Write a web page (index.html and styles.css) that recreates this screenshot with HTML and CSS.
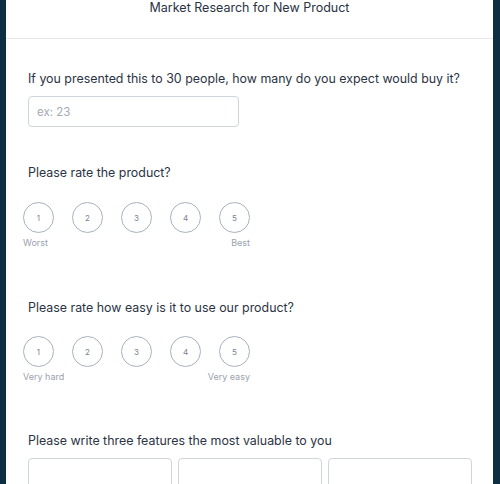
FILE: index.html
```html
<!DOCTYPE html>
<html>
<head>
<meta charset="utf-8">
<link rel="stylesheet" href="styles.css">
</head>
<body>
<div class="panel">
  <header class="header"><h1 class="title">Market Research for New Product</h1></header>
  <main class="content">
    <section class="q q-first">
      <p class="q-label">If you presented this to 30 people, how many do you expect would buy it?</p>
      <div class="input input-number"><span class="placeholder">ex: 23</span></div>
    </section>
    <section class="q q-rating">
      <p class="q-label">Please rate the product?</p>
      <div class="rating">
        <div class="circles">
          <span class="circle">1</span><span class="circle">2</span><span class="circle">3</span><span class="circle">4</span><span class="circle">5</span>
        </div>
        <div class="scale"><span>Worst</span><span>Best</span></div>
      </div>
    </section>
    <section class="q q-rating q-rating-2">
      <p class="q-label">Please rate how easy is it to use our product?</p>
      <div class="rating">
        <div class="circles">
          <span class="circle">1</span><span class="circle">2</span><span class="circle">3</span><span class="circle">4</span><span class="circle">5</span>
        </div>
        <div class="scale"><span>Very hard</span><span>Very easy</span></div>
      </div>
    </section>
    <section class="q q-last">
      <p class="q-label">Please write three features the most valuable to you</p>
      <div class="triple">
        <div class="input input-box"></div>
        <div class="input input-box"></div>
        <div class="input input-box"></div>
      </div>
    </section>
  </main>
</div>
</body>
</html>
```
FILE: styles.css
```css
html, body {
  margin: 0;
  padding: 0;
  height: 100%;
  overflow: hidden;
}
body {
  background: #0d2e43;
  font-family: Inter, "Noto Sans", sans-serif;
  color: #2d3748;
}
.panel {
  margin: 0 7px 0 6px;
  background: #ffffff;
  min-height: 100%;
}
.header {
  height: 38px;
  border-bottom: 1px solid #e6e8ee;
}
.title {
  margin: 0;
  font-size: 12.5px;
  font-weight: 400;
  line-height: 15px;
  text-align: center;
  color: #2a3344;
}
.content {
  padding: 29px 21px 0 22px;
}
.q-label {
  margin: 0;
  padding-top: 1px;
  font-size: 12.4px;
  line-height: 20px;
  color: #2b3343;
  white-space: nowrap;
}
.input {
  box-sizing: border-box;
  border: 1px solid #cfd4dd;
  border-radius: 4px;
  background: #fff;
}
.input-number {
  margin-top: 7px;
  width: 211px;
  height: 31px;
  display: flex;
  align-items: center;
  padding-left: 8px;
}
.placeholder {
  font-size: 11.5px;
  color: #a3aab6;
}
.q-rating {
  margin-top: 35px;
}
.q-rating-2 {
  margin-top: 47px;
}
.rating {
  margin-top: 19px;
  margin-left: -5px;
  width: 227px;
}
.q-rating-2 .rating {
  margin-top: 18px;
}
.circles {
  display: flex;
  gap: 18px;
}
.circle {
  box-sizing: border-box;
  width: 31px;
  height: 31px;
  border: 1px solid #a9b0c0;
  border-radius: 50%;
  display: flex;
  align-items: center;
  justify-content: center;
  font-size: 8px;
  color: #7a8294;
}
.scale {
  margin-top: 3px;
  display: flex;
  justify-content: space-between;
  font-size: 9px;
  line-height: 14px;
  color: #9aa1ad;
}
.q-last {
  margin-top: 46px;
}
.triple {
  margin-top: 7px;
  display: flex;
  gap: 6px;
}
.input-box {
  flex: 1;
  height: 60px;
}
```
